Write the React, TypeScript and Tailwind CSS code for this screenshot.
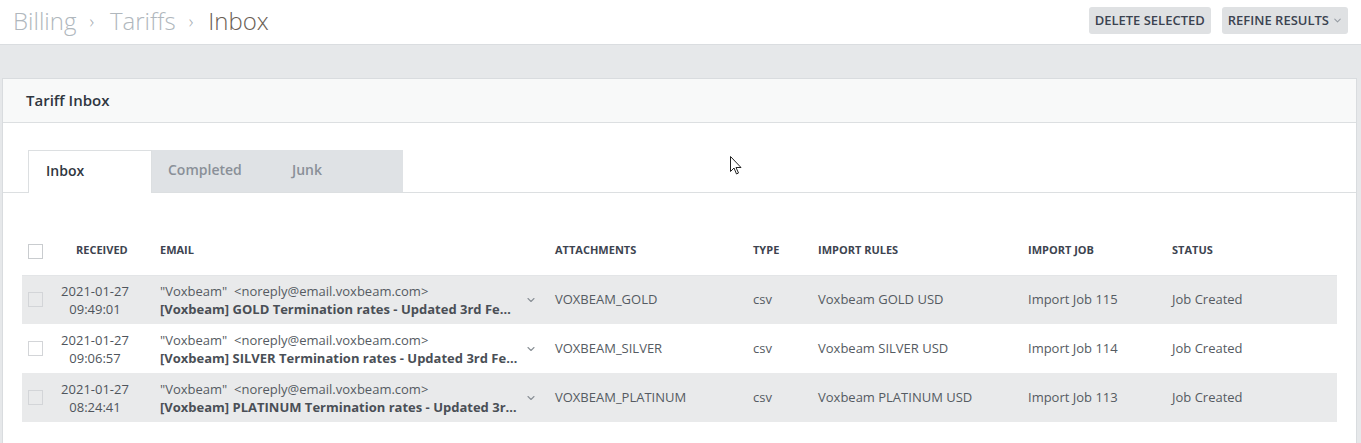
import { ChevronDown } from "lucide-react";

const rows = [
  {
    date: "2021-01-27",
    time: "09:49:01",
    subject: "[Voxbeam] GOLD Termination rates - Updated 3rd February 2021",
    attachment: "VOXBEAM_GOLD",
    rule: "Voxbeam GOLD USD",
    job: "Import Job 115",
  },
  {
    date: "2021-01-27",
    time: "09:06:57",
    subject: "[Voxbeam] SILVER Termination rates - Updated 3rd February 2021",
    attachment: "VOXBEAM_SILVER",
    rule: "Voxbeam SILVER USD",
    job: "Import Job 114",
  },
  {
    date: "2021-01-27",
    time: "08:24:41",
    subject: "[Voxbeam] PLATINUM Termination rates - Updated 3rd February 2021",
    attachment: "VOXBEAM_PLATINUM",
    rule: "Voxbeam PLATINUM USD",
    job: "Import Job 113",
  },
];

const App = () => {
  return (
    <div
      className="min-h-screen bg-[#e6e8ea] relative"
      style={{ fontFamily: '"Open Sans", "Noto Sans", sans-serif' }}
    >
      {/* top bar */}
      <div className="h-[45px] bg-white border-b border-[#dadde0] flex items-center justify-between pl-[13px] pr-[13px]">
        <div className="flex items-center text-[24px] font-light leading-none -mt-[2px]">
          <span className="text-[#b0b7bd]">Billing</span>
          <span className="text-[#a3aab0] text-[18px] ml-[13px] mr-[16px]">›</span>
          <span className="text-[#b0b7bd]">Tariffs</span>
          <span className="text-[#a3aab0] text-[18px] ml-[13px] mr-[15px]">›</span>
          <span className="text-[#6a5e54]">Inbox</span>
        </div>
        <div className="flex items-center gap-[11px] mt-[-3px]">
          <button className="h-[27px] px-[6px] rounded-[3px] bg-[#dfe1e3] text-[13px] font-semibold text-[#3b4350]">
            DELETE SELECTED
          </button>
          <button className="h-[27px] pl-[6px] pr-[5px] rounded-[3px] bg-[#dfe1e3] text-[13px] font-semibold text-[#3b4350] flex items-center gap-[3px]">
            REFINE RESULTS
            <ChevronDown size={11} strokeWidth={2.2} className="text-[#969ca3]" />
          </button>
        </div>
      </div>

      {/* card */}
      <div className="mt-[33px] ml-[2px] mr-[4px] bg-white border border-[#d9dcdf]">
        <div className="h-[44px] bg-[#f8f9f9] border-b border-[#dcdfe1] flex items-center pl-[23px]">
          <span className="text-[15px] font-semibold text-[#2f3640]">Tariff Inbox</span>
        </div>

        <div className="pt-[27px]">
          <div className="flex pl-[25px] border-b border-[#dcdfe1]">
            <div className="w-[124px] h-[43px] -mb-px bg-white border border-b-0 border-[#dcdfe1] flex items-center pl-[17px] pb-[3px] text-[14px] font-semibold text-[#2f3640]">
              Inbox
            </div>
            <div className="flex bg-[#dfe2e5] h-[42px] w-[251px] pb-[3px]">
              <div className="w-[124px] flex items-center pl-[16px] text-[14px] font-semibold text-[#8a9098]">
                Completed
              </div>
              <div className="flex items-center pl-[16px] text-[14px] font-semibold text-[#8a9098]">
                Junk
              </div>
            </div>
          </div>

          <div className="px-[19px] pt-[38px] pb-[40px]">
            <table className="w-full table-fixed border-collapse text-[13px]">
              <colgroup>
                <col className="w-[38px]" />
                <col className="w-[88px]" />
                <col className="w-[395px]" />
                <col className="w-[198px]" />
                <col className="w-[65px]" />
                <col className="w-[210px]" />
                <col className="w-[144px]" />
                <col />
              </colgroup>
              <thead>
                <tr className="h-[44px] border-b border-[#e3e5e7] text-[11px] font-bold text-[#3d4450] text-left">
                  <th className="pl-[6px] pb-[3px]">
                    <div className="w-[15px] h-[15px] border border-[#c9cccf] bg-white" />
                  </th>
                  <th className="pl-[16px] pb-[6px] font-bold">RECEIVED</th>
                  <th className="pl-[12px] pb-[6px] font-bold">EMAIL</th>
                  <th className="pl-[12px] pb-[6px] font-bold">ATTACHMENTS</th>
                  <th className="pl-[12px] pb-[6px] font-bold">TYPE</th>
                  <th className="pl-[12px] pb-[6px] font-bold">IMPORT RULES</th>
                  <th className="pl-[12px] pb-[6px] font-bold">IMPORT JOB</th>
                  <th className="pl-[12px] pb-[6px] font-bold">STATUS</th>
                </tr>
              </thead>
              <tbody>
                {rows.map((r, i) => (
                  <tr
                    key={i}
                    className={`h-[49px] text-[#555b62] ${i % 2 === 0 ? "bg-[#e9eaeb]" : "bg-white"}`}
                  >
                    <td className="pl-[6px]">
                      <div className="w-[15px] h-[15px] border border-[#d3d5d8]" />
                    </td>
                    <td>
                      <div className="w-[70px] text-center leading-[18px] text-[#4f555c]">
                        <div>{r.date}</div>
                        <div>{r.time}</div>
                      </div>
                    </td>
                    <td className="pl-[12px]">
                      <div className="flex items-center">
                        <div className="w-[358px] min-w-0 leading-[18px]">
                          <div className="text-[#555b62] whitespace-pre">
                            {'"Voxbeam"  <noreply@email.voxbeam.com>'}
                          </div>
                          <div className="font-bold text-[#4a4f56] truncate">{r.subject}</div>
                        </div>
                        <ChevronDown size={12} strokeWidth={2.2} className="ml-[7px] shrink-0 text-[#8a9096]" />
                      </div>
                    </td>
                    <td className="pl-[12px]">{r.attachment}</td>
                    <td className="pl-[12px]">csv</td>
                    <td className="pl-[12px]">{r.rule}</td>
                    <td className="pl-[12px]">{r.job}</td>
                    <td className="pl-[12px]">Job Created</td>
                  </tr>
                ))}
              </tbody>
            </table>
          </div>
        </div>
      </div>

      {/* mouse pointer */}
      <svg className="absolute left-[730px] top-[156px]" width="13" height="20" viewBox="0 0 13 20">
        <path d="M0.5 0.5 L0.5 15.5 L4 12 L6.5 18 L8.5 17 L6 11.5 L11 11.5 Z" fill="white" stroke="#222" strokeWidth="1" />
      </svg>
    </div>
  );
};

export default App;
